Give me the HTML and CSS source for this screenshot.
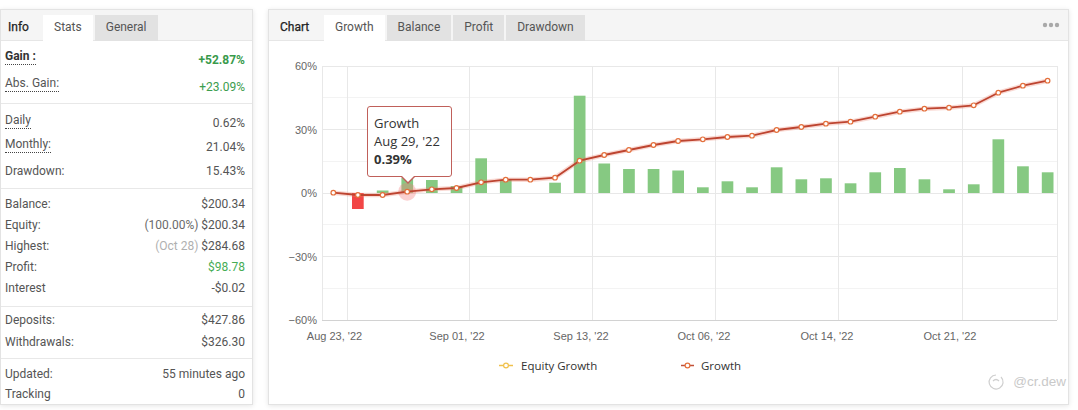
FILE: index.html
```html
<!DOCTYPE html>
<html>
<head>
<meta charset="utf-8">
<link rel="stylesheet" href="styles.css">
</head>
<body>
<div class="page">
  <section class="card stats-card">
    <div class="tabbar">
      <div class="tab-title info-title">Info</div>
      <div class="tab active">Stats</div>
      <div class="tab">General</div>
    </div>
    <div class="group g1">
      <div class="row r27"><span class="lbl dotted strong">Gain :</span><span class="val green strong">+52.87%</span></div>
      <div class="row r27"><span class="lbl dotted">Abs. Gain:</span><span class="val green">+23.09%</span></div>
    </div>
    <div class="group g2">
      <div class="row r24"><span class="lbl dotted">Daily</span><span class="val">0.62%</span></div>
      <div class="row r24"><span class="lbl dotted">Monthly:</span><span class="val">21.04%</span></div>
      <div class="row r24"><span class="lbl">Drawdown:</span><span class="val">15.43%</span></div>
    </div>
    <div class="group g3">
      <div class="row r21"><span class="lbl">Balance:</span><span class="val">$200.34</span></div>
      <div class="row r21"><span class="lbl">Equity:</span><span class="val"><span class="muted">(100.00%)</span> $200.34</span></div>
      <div class="row r21"><span class="lbl">Highest:</span><span class="val"><span class="faint">(Oct 28)</span> $284.68</span></div>
      <div class="row r21"><span class="lbl">Profit:</span><span class="val green-light">$98.78</span></div>
      <div class="row r21"><span class="lbl">Interest</span><span class="val">-$0.02</span></div>
    </div>
    <div class="group g4">
      <div class="row r22"><span class="lbl">Deposits:</span><span class="val">$427.86</span></div>
      <div class="row r22"><span class="lbl">Withdrawals:</span><span class="val">$326.30</span></div>
    </div>
    <div class="group g5">
      <div class="row r20"><span class="lbl">Updated:</span><span class="val">55 minutes ago</span></div>
      <div class="row r20"><span class="lbl">Tracking</span><span class="val">0</span></div>
    </div>
  </section>

  <section class="card chart-card">
    <div class="tabbar">
      <div class="tab-title chart-title">Chart</div>
      <div class="tab active">Growth</div>
      <div class="tab">Balance</div>
      <div class="tab">Profit</div>
      <div class="tab">Drawdown</div>
      <svg class="dots" width="18" height="6" viewBox="0 0 18 6">
        <circle cx="3" cy="3" r="2.2" fill="#a9a9a9"/>
        <circle cx="9" cy="3" r="2.2" fill="#a9a9a9"/>
        <circle cx="15" cy="3" r="2.2" fill="#a9a9a9"/>
      </svg>
    </div>
    <div class="chart-body">
      <svg class="chart" width="799" height="363" viewBox="269 41 799 363">
        <g stroke="#f3f3f3" stroke-width="1">
          <line x1="322" y1="97.5" x2="1057" y2="97.5"/>
          <line x1="322" y1="161.5" x2="1057" y2="161.5"/>
          <line x1="322" y1="224.5" x2="1057" y2="224.5"/>
          <line x1="322" y1="288.5" x2="1057" y2="288.5"/>
        </g>
        <g stroke="#e8e8e8" stroke-width="1">
          <line x1="322" y1="66.5" x2="1057" y2="66.5"/>
          <line x1="322" y1="129.5" x2="1057" y2="129.5"/>
          <line x1="322" y1="193.5" x2="1057" y2="193.5"/>
          <line x1="322" y1="256.5" x2="1057" y2="256.5"/>
          <line x1="322.5" y1="66" x2="322.5" y2="320"/>
          <line x1="347.5" y1="66" x2="347.5" y2="320"/>
          <line x1="469.5" y1="66" x2="469.5" y2="320"/>
          <line x1="592.5" y1="66" x2="592.5" y2="320"/>
          <line x1="715.5" y1="66" x2="715.5" y2="320"/>
          <line x1="838.5" y1="66" x2="838.5" y2="320"/>
          <line x1="962.5" y1="66" x2="962.5" y2="320"/>
          <line x1="1057.5" y1="66" x2="1057.5" y2="320"/>
        </g>
        <line x1="322" y1="320.5" x2="1057" y2="320.5" stroke="#d2d2d2" stroke-width="1"/>

        <g class="axis-label" text-anchor="end">
          <text x="317" y="70">60%</text>
          <text x="317" y="134">30%</text>
          <text x="317" y="197">0%</text>
          <text x="317" y="261">−30%</text>
          <text x="317" y="324">−60%</text>
        </g>
        <g class="axis-label" text-anchor="middle">
          <text x="334.5" y="340">Aug 23, '22</text>
          <text x="457" y="340">Sep 01, '22</text>
          <text x="581" y="340">Sep 13, '22</text>
          <text x="704" y="340">Oct 06, '22</text>
          <text x="827" y="340">Oct 14, '22</text>
          <text x="950" y="340">Oct 21, '22</text>
        </g>

        <rect x="352" y="193" width="11.7" height="16" fill="#f24646"/>
        <g fill="#86c982">
          <rect x="376.8" y="190.5" width="11.7" height="2.5"/>
          <rect x="401.4" y="178" width="11.7" height="15"/>
          <rect x="426" y="180" width="11.7" height="13"/>
          <rect x="450.7" y="186" width="11.7" height="7"/>
          <rect x="475.3" y="158.3" width="11.7" height="34.7"/>
          <rect x="499.9" y="180" width="11.7" height="13"/>
          <rect x="549.2" y="182.7" width="11.7" height="10.3"/>
          <rect x="573.8" y="95.7" width="11.7" height="97.3"/>
          <rect x="598.4" y="163.5" width="11.7" height="29.5"/>
          <rect x="623.1" y="169" width="11.7" height="24"/>
          <rect x="647.7" y="169" width="11.7" height="24"/>
          <rect x="672.3" y="170.5" width="11.7" height="22.5"/>
          <rect x="697" y="187.3" width="11.7" height="5.7"/>
          <rect x="721.6" y="181.3" width="11.7" height="11.7"/>
          <rect x="746.2" y="187.3" width="11.7" height="5.7"/>
          <rect x="770.8" y="167.3" width="11.7" height="25.7"/>
          <rect x="795.5" y="179.3" width="11.7" height="13.7"/>
          <rect x="820.1" y="178.3" width="11.7" height="14.7"/>
          <rect x="844.7" y="183.3" width="11.7" height="9.7"/>
          <rect x="869.4" y="172.3" width="11.7" height="20.7"/>
          <rect x="894" y="168" width="11.7" height="25"/>
          <rect x="918.6" y="179.3" width="11.7" height="13.7"/>
          <rect x="943.2" y="189.3" width="11.7" height="3.7"/>
          <rect x="967.9" y="184.3" width="11.7" height="8.7"/>
          <rect x="992.5" y="139.3" width="11.7" height="53.7"/>
          <rect x="1017.1" y="166.3" width="11.7" height="26.7"/>
          <rect x="1041.8" y="172.3" width="11.7" height="20.7"/>
        </g>

        <circle cx="407.2" cy="191.7" r="9" fill="rgba(240,120,120,0.35)"/>

        <polyline fill="none" stroke="rgba(236,130,110,0.30)" stroke-width="4.5" stroke-linejoin="round" stroke-linecap="round"
          points="333.3,192.7 357.9,195 382.6,195 407.2,191.7 431.8,189.3 456.5,188 481.1,182.3 505.7,179.7 530.3,179.7 555,177.7 579.6,160.7 604.2,155 628.9,150 653.5,145 678.1,141 702.8,139.3 727.4,137 752,135.7 776.6,130 801.3,127 825.9,123.7 850.5,121.7 875.2,116.7 899.8,111.7 924.4,108.7 949,107.7 973.7,105.3 998.3,92.7 1022.9,85.7 1047.6,80.7"/>
        <polyline fill="none" stroke="#bd4430" stroke-width="1.8" stroke-linejoin="round"
          points="333.3,192.7 357.9,195 382.6,195 407.2,191.7 431.8,189.3 456.5,188 481.1,182.3 505.7,179.7 530.3,179.7 555,177.7 579.6,160.7 604.2,155 628.9,150 653.5,145 678.1,141 702.8,139.3 727.4,137 752,135.7 776.6,130 801.3,127 825.9,123.7 850.5,121.7 875.2,116.7 899.8,111.7 924.4,108.7 949,107.7 973.7,105.3 998.3,92.7 1022.9,85.7 1047.6,80.7"/>
        <g fill="#fff" stroke="#e3703c" stroke-width="1.2">
          <circle cx="333.3" cy="192.7" r="2.3"/>
          <circle cx="357.9" cy="195" r="2.3"/>
          <circle cx="382.6" cy="195" r="2.3"/>
          <circle cx="407.2" cy="191.7" r="2.3"/>
          <circle cx="431.8" cy="189.3" r="2.3"/>
          <circle cx="456.5" cy="188" r="2.3"/>
          <circle cx="481.1" cy="182.3" r="2.3"/>
          <circle cx="505.7" cy="179.7" r="2.3"/>
          <circle cx="530.3" cy="179.7" r="2.3"/>
          <circle cx="555" cy="177.7" r="2.3"/>
          <circle cx="579.6" cy="160.7" r="2.3"/>
          <circle cx="604.2" cy="155" r="2.3"/>
          <circle cx="628.9" cy="150" r="2.3"/>
          <circle cx="653.5" cy="145" r="2.3"/>
          <circle cx="678.1" cy="141" r="2.3"/>
          <circle cx="702.8" cy="139.3" r="2.3"/>
          <circle cx="727.4" cy="137" r="2.3"/>
          <circle cx="752" cy="135.7" r="2.3"/>
          <circle cx="776.6" cy="130" r="2.3"/>
          <circle cx="801.3" cy="127" r="2.3"/>
          <circle cx="825.9" cy="123.7" r="2.3"/>
          <circle cx="850.5" cy="121.7" r="2.3"/>
          <circle cx="875.2" cy="116.7" r="2.3"/>
          <circle cx="899.8" cy="111.7" r="2.3"/>
          <circle cx="924.4" cy="108.7" r="2.3"/>
          <circle cx="949" cy="107.7" r="2.3"/>
          <circle cx="973.7" cy="105.3" r="2.3"/>
          <circle cx="998.3" cy="92.7" r="2.3"/>
          <circle cx="1022.9" cy="85.7" r="2.3"/>
          <circle cx="1047.6" cy="80.7" r="2.3"/>
        </g>

        <g class="legend">
          <line x1="499" y1="365.5" x2="513" y2="365.5" stroke="#f0c14c" stroke-width="1.5"/>
          <circle cx="506" cy="365.5" r="2.4" fill="#fff" stroke="#f0c14c" stroke-width="1.2"/>
          <text x="521" y="369.5">Equity Growth</text>
          <line x1="681" y1="365.5" x2="694" y2="365.5" stroke="#c0503a" stroke-width="1.5"/>
          <circle cx="687.5" cy="365.5" r="2.4" fill="#fff" stroke="#e3703c" stroke-width="1.2"/>
          <text x="701" y="369.5">Growth</text>
        </g>

        <g class="watermark">
          <path d="M996 375 a7 7 0 1 0 5 2" fill="none" stroke="#cfcfcf" stroke-width="1.2"/>
          <path d="M993 381 q3 -3 6 0" fill="none" stroke="#cfcfcf" stroke-width="1.2"/>
          <text x="1066" y="386" text-anchor="end">@cr.dew</text>
        </g>
      </svg>
      <div class="tooltip">
        <div>Growth</div>
        <div>Aug 29, '22</div>
        <div class="tip-value">0.39%</div>
      </div>
    </div>
  </section>
</div>
</body>
</html>
```

FILE: styles.css
```css
* { box-sizing: border-box; }

body {
  margin: 0;
  background: #ffffff;
  font-family: Roboto, "Liberation Sans", Arial, sans-serif;
  font-size: 12px;
  color: #555;
}

.page {
  display: flex;
  padding-top: 9px;
  height: 410px;
}

.card {
  height: 396px;
  border: 1px solid #e3e3e3;
  box-shadow: 0 1px 5px rgba(0, 0, 0, 0.10);
  background: #fff;
  display: flex;
  flex-direction: column;
}

.stats-card { width: 253px; }

.chart-card {
  width: 801px;
  margin-left: 15px;
}

.tabbar {
  height: 31px;
  flex-shrink: 0;
  background: #f5f5f5;
  border-bottom: 1px solid #e6e6e6;
  display: flex;
  align-items: flex-end;
}

.tab-title {
  height: 26px;
  line-height: 24px;
  margin-bottom: -1px;
  color: #222;
  font-weight: 400;
  -webkit-text-stroke: 0.25px #222;
}

.info-title { width: 42px; padding-left: 7px; }
.chart-title { width: 55px; padding-left: 11px; }

.tab {
  height: 26px;
  line-height: 24px;
  margin-bottom: -1px;
  margin-right: 2px;
  padding: 0 11px;
  background: #e2e2e2;
  color: #555;
}

.tab.active { background: #fff; }

.dots {
  margin-left: auto;
  margin-right: 8px;
  align-self: center;
}

.group { border-top: 1px solid #e8e8e8; }
.g1 { border-top: none; padding: 5px 0 3px; }
.g2 { padding: 7px 0 5px; }
.g3 { padding: 4px 0 8px; }
.g4 { padding: 2px 0 5px; }
.g5 { padding: 5px 0 0; }

.row {
  display: flex;
  justify-content: space-between;
  align-items: center;
  padding: 0 7px 0 4px;
}

.r27 { height: 27px; }
.r24 { height: 24px; }
.r22 { height: 22px; }
.r21 { height: 21px; }
.r20 { height: 20px; }

.lbl { line-height: 16px; color: #555; }
.val { line-height: 16px; color: #555; }

.dotted {
  border-bottom: 1px dotted #444;
  margin-bottom: 6px;
}

.strong { font-weight: 700; color: #333; }
.val.green { color: #3c9d4e; }
.val.green.strong { color: #389a4b; }
.green-light { color: #46ad55 !important; }
.muted { color: #6a6a6a; }
.faint { color: #b0b0b0; }

.chart-body {
  flex: 1;
  position: relative;
}

.chart { display: block; }

.axis-label text {
  font-family: "Liberation Sans", Arial, sans-serif;
  font-size: 11px;
  fill: #666;
}

.legend text {
  font-family: "Open Sans", "Noto Sans", sans-serif;
  font-size: 11.5px;
  fill: #333;
}

.watermark text {
  font-family: "Liberation Sans", Arial, sans-serif;
  font-size: 13.5px;
  fill: #c9c9c9;
}

.tooltip {
  position: absolute;
  left: 98px;
  top: 65px;
  width: 85px;
  height: 71px;
  padding: 7px 0 8px 6px;
  border: 1px solid #c0605a;
  border-radius: 3px;
  background: rgba(255, 255, 255, 0.94);
  font-family: "Open Sans", "Noto Sans", sans-serif;
  font-size: 13px;
  line-height: 18px;
  color: #333;
  white-space: nowrap;
}

.tooltip::before {
  content: "";
  position: absolute;
  left: 32px;
  top: 100%;
  border-left: 8px solid transparent;
  border-right: 8px solid transparent;
  border-top: 8px solid #c0605a;
}

.tooltip::after {
  content: "";
  position: absolute;
  left: 33px;
  top: 100%;
  margin-top: -1px;
  border-left: 7px solid transparent;
  border-right: 7px solid transparent;
  border-top: 7px solid #fff;
}

.tip-value { font-weight: 700; }
```
